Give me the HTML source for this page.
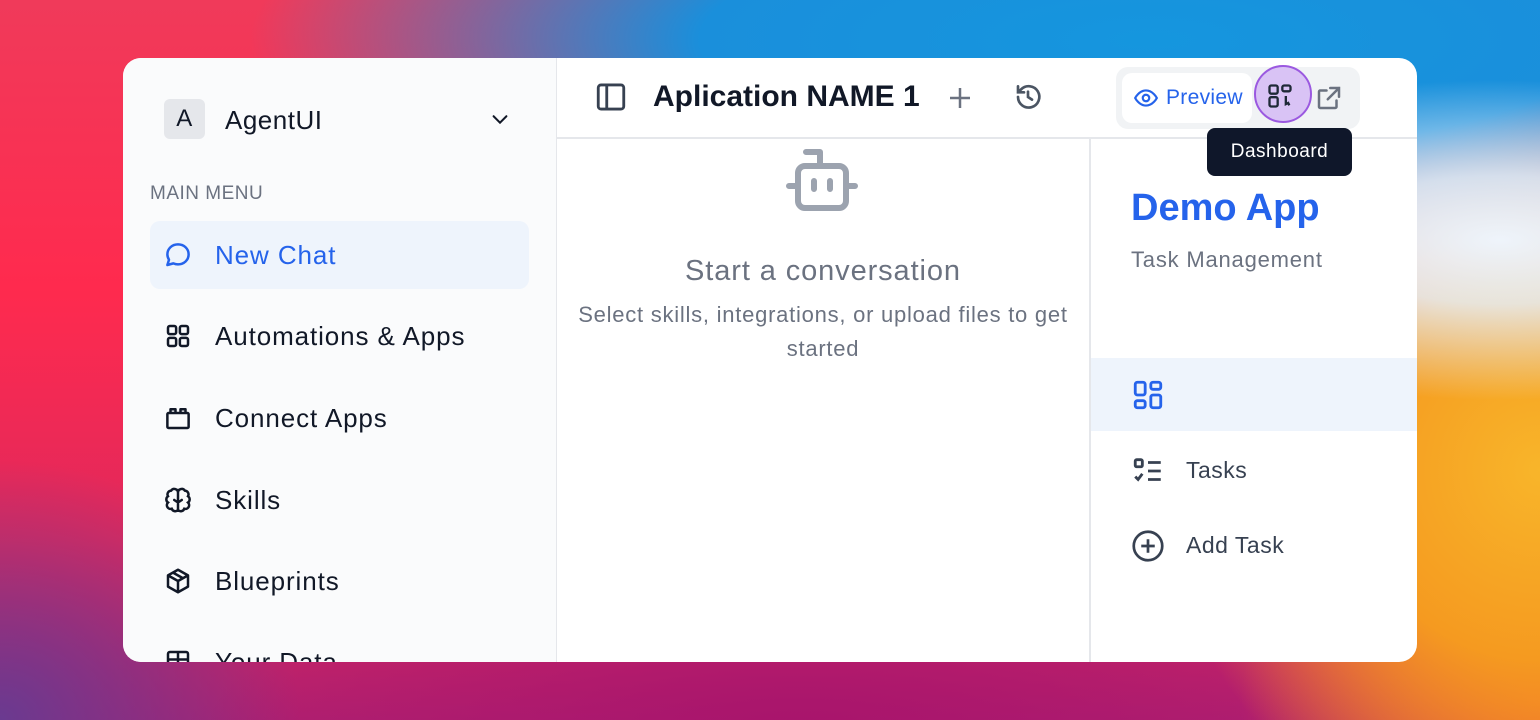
<!DOCTYPE html><html><head><style>
*{margin:0;padding:0;box-sizing:border-box}
body{width:1540px;height:720px;overflow:hidden;position:relative;font-family:"Liberation Sans",sans-serif;background:#f0305a}
.bg{position:absolute;inset:0;background:
radial-gradient(ellipse 420px 160px at 1500px 240px,#eef4fb 0%,rgba(230,240,250,0.85) 40%,rgba(230,240,250,0) 100%),
radial-gradient(ellipse 900px 230px at 1150px 40px,#1596de 0%,#1a8fdb 50%,rgba(30,130,215,0) 100%),
radial-gradient(ellipse 380px 380px at 1540px 470px,#f8b52a 0%,#f59a20 50%,rgba(245,154,32,0) 100%),
radial-gradient(ellipse 300px 200px at 1540px 700px,#f06030 0%,rgba(240,96,48,0) 100%),
radial-gradient(ellipse 600px 160px at 800px 730px,#a8146c 0%,rgba(168,20,108,0) 100%),
radial-gradient(ellipse 300px 260px at 0px 720px,#6a3a90 0%,rgba(106,58,144,0) 100%),
linear-gradient(180deg,#f03a5a 0%,#ff2a4e 40%,#e0285c 75%,#b02070 100%);}
.win{position:absolute;left:123px;top:58px;width:1294px;height:604px;background:#fff;border-radius:18px;overflow:hidden;letter-spacing:0.5px}
.side{position:absolute;left:0;top:0;width:434px;height:604px;background:#fafbfc;border-right:1px solid #e5e7eb}
.t{position:absolute;white-space:nowrap}
.nav{position:absolute;left:27px;width:379px;height:68px;display:flex;align-items:center;font-size:26px;color:#111827;letter-spacing:0.9px}
.nav svg{margin:0 22px 0 13px}
.hdr{position:absolute;left:434px;top:0;right:0;height:81px;border-bottom:2px solid #e5e7eb}
.vl{position:absolute;top:81px;bottom:0;left:966px;width:2px;background:#e5e7eb}
</style></head><body>
<div class="bg"></div>
<div class="win">
 <div class="side">
  <div class="t" style="left:41px;top:41px;width:41px;height:40px;background:#e5e7eb;border-radius:6px;font-size:24px;color:#111827;text-align:center;line-height:40px">A</div>
  <div class="t" style="left:102px;top:47px;font-size:26px;color:#111827">AgentUI</div>
  <svg class="t" style="left:366px;top:50px" width="22" height="22" viewBox="0 0 24 24" fill="none" stroke="#111827" stroke-width="2.2" stroke-linecap="round"><path d="M5 9l7 7 7-7"/></svg>
  <div class="t" style="left:27px;top:125px;font-size:19px;color:#6b7280">MAIN MENU</div>
  <div class="nav" style="top:163px;background:#eef4fc;border-radius:10px;color:#2563eb"><svg width="30" height="30" viewBox="0 0 24 24" fill="none" stroke="#2563eb" stroke-width="2" stroke-linejoin="round"><path d="M12 3.5c4.8 0 8.5 3.5 8.5 8s-3.7 8-8.5 8c-1.3 0-2.6-.3-3.7-.8L3.5 20l1.3-4.2C4 14.5 3.5 13 3.5 11.5c0-4.5 3.7-8 8.5-8z"/></svg>New Chat</div>
  <div class="nav" style="top:244px"><svg width="30" height="30" viewBox="0 0 24 24" fill="none" stroke="#111827" stroke-width="2"><rect x="4" y="4" width="6.5" height="6.5" rx="1.5"/><rect x="13.5" y="4" width="6.5" height="6.5" rx="1.5"/><rect x="4" y="13.5" width="6.5" height="6.5" rx="1.5"/><rect x="13.5" y="13.5" width="6.5" height="6.5" rx="1.5"/></svg>Automations &amp; Apps</div>
  <div class="nav" style="top:326px"><svg width="30" height="30" viewBox="0 0 24 24" fill="none" stroke="#111827" stroke-width="2" stroke-linejoin="round"><rect x="3.5" y="8" width="17" height="12" rx="1"/><path d="M6 8V5h4v3M14 8V5h4v3"/></svg>Connect Apps</div>
  <div class="nav" style="top:408px"><svg width="30" height="30" viewBox="0 0 24 24" fill="none" stroke="#111827" stroke-width="2" stroke-linecap="round"><path d="M12 4v16M12 6a3 3 0 0 0-5.5-1.5A3 3 0 0 0 4 9a3 3 0 0 0 0 5 3 3 0 0 0 3 5 3 3 0 0 0 5 1M12 6a3 3 0 0 1 5.5-1.5A3 3 0 0 1 20 9a3 3 0 0 1 0 5 3 3 0 0 1-3 5 3 3 0 0 1-5 1M9 12l3 2 3-2"/></svg>Skills</div>
  <div class="nav" style="top:489px"><svg width="30" height="30" viewBox="0 0 24 24" fill="none" stroke="#111827" stroke-width="2" stroke-linejoin="round"><path d="M12 3l8 4.5v9L12 21l-8-4.5v-9z M4 7.5l8 4.5 8-4.5M12 12v9M8 5.3l8 4.5"/></svg>Blueprints</div>
  <div class="nav" style="top:570px"><svg width="30" height="30" viewBox="0 0 24 24" fill="none" stroke="#111827" stroke-width="2"><rect x="4" y="4" width="16" height="16" rx="1.5"/><path d="M4 10h16M12 4v16"/></svg>Your Data</div>
 </div>
 <div class="hdr">
  <svg class="t" style="left:37px;top:22px" width="34" height="34" viewBox="0 0 24 24" fill="none" stroke="#374151" stroke-width="2"><rect x="3" y="3.5" width="18" height="17" rx="2"/><path d="M9 3.5v17"/></svg>
  <div class="t" style="left:96px;top:22px;font-size:30px;font-weight:bold;color:#111827;letter-spacing:0">Aplication NAME 1</div>
  <svg class="t" style="left:388px;top:25px" width="30" height="30" viewBox="0 0 24 24" fill="none" stroke="#6b7280" stroke-width="2"><path d="M12 4v16M4 12h16"/></svg>
  <svg class="t" style="left:455px;top:23px" width="32" height="32" viewBox="0 0 24 24" fill="none" stroke="#4b5563" stroke-width="2" stroke-linecap="round"><path d="M4.5 12a8 8 0 1 0 2.3-5.7L4.5 8.5M4.5 4v4.5H9M12 8v4l3 2"/></svg>
  <div class="t" style="left:559px;top:9px;width:244px;height:62px;background:#f1f3f5;border-radius:12px"></div>
  <div class="t" style="left:565px;top:15px;width:130px;height:50px;background:#fff;border-radius:10px;color:#2563eb;font-size:21px;line-height:50px;padding-left:44px;letter-spacing:0.3px">Preview</div>
  <svg class="t" style="left:575px;top:27px" width="28" height="26" viewBox="0 0 24 24" fill="none" stroke="#2563eb" stroke-width="2"><path d="M2 12s3.5-7 10-7 10 7 10 7-3.5 7-10 7S2 12 2 12z"/><circle cx="12" cy="12" r="3"/></svg>
  <div class="t" style="left:697px;top:7px;width:58px;height:58px;border-radius:50%;background:#d9c3f5;border:2px solid #9b59e0"></div>
  <svg class="t" style="left:709px;top:24px" width="28" height="28" viewBox="0 0 24 24" fill="none" stroke="#1f2937" stroke-width="2"><rect x="3" y="3" width="7" height="7" rx="1.5"/><rect x="14" y="3" width="7" height="5" rx="1.5"/><rect x="3" y="13" width="7" height="8" rx="1.5"/><path d="M17 12v7l2-1 1 2" /></svg>
  <svg class="t" style="left:757px;top:25px" width="30" height="30" viewBox="0 0 24 24" fill="none" stroke="#6b7280" stroke-width="2" stroke-linecap="round"><path d="M13 4h7v7M20 4l-9 9M18 14v5a1 1 0 0 1-1 1H5a1 1 0 0 1-1-1V7a1 1 0 0 1 1-1h5"/></svg>
 </div>
 <div class="vl"></div>
 <svg class="t" style="left:659px;top:89px" width="80" height="68" viewBox="0 0 80 68" fill="none" stroke="#9ca3af" stroke-width="6" stroke-linecap="round" stroke-linejoin="round"><path d="M24 5h14v14"/><rect x="16" y="19" width="48" height="42" rx="7"/><path d="M7 39h8M65 39h8M32 34v8M48 34v8"/></svg>
 <div class="t" style="left:434px;width:532px;top:197px;text-align:center;font-size:29px;color:#6b7280;letter-spacing:0.9px">Start a conversation</div>
 <div class="t" style="left:434px;width:532px;top:240px;text-align:center;font-size:22px;line-height:34px;color:#6b7280;white-space:normal;padding:0 4px;letter-spacing:0.75px">Select skills, integrations, or upload files to get started</div>
 <div class="t" style="left:1008px;top:129px;font-size:38px;font-weight:bold;color:#2563eb;letter-spacing:0">Demo App</div>
 <div class="t" style="left:1008px;top:189px;font-size:22px;color:#6b7280;letter-spacing:0.8px">Task Management</div>
 <div class="t" style="left:968px;top:300px;width:326px;height:73px;background:#eef4fc"></div>
 <svg class="t" style="left:1008px;top:320px" width="34" height="34" viewBox="0 0 24 24" fill="none" stroke="#2563eb" stroke-width="2"><rect x="3" y="3" width="7" height="9" rx="1.5"/><rect x="14" y="3" width="7" height="5" rx="1.5"/><rect x="14" y="12" width="7" height="9" rx="1.5"/><rect x="3" y="16" width="7" height="5" rx="1.5"/></svg>
 <svg class="t" style="left:1008px;top:396px" width="34" height="34" viewBox="0 0 24 24" fill="none" stroke="#374151" stroke-width="2"><rect x="3" y="4" width="5" height="5" rx="1"/><path d="M3 16l2 2 3-4M12 6h9M12 12h9M12 18h9"/></svg>
 <div class="t" style="left:1063px;top:399px;font-size:23px;color:#374151">Tasks</div>
 <svg class="t" style="left:1007px;top:470px" width="36" height="36" viewBox="0 0 24 24" fill="none" stroke="#374151" stroke-width="1.8"><circle cx="12" cy="12" r="9.5"/><path d="M12 7.5v9M7.5 12h9"/></svg>
 <div class="t" style="left:1063px;top:474px;font-size:23px;color:#374151">Add Task</div>
</div>
<div class="t" style="left:1207px;top:128px;width:145px;height:48px;background:#0f172a;border-radius:8px;color:#fff;font-size:19px;line-height:48px;text-align:center;letter-spacing:0.5px">Dashboard</div>
</body></html>
